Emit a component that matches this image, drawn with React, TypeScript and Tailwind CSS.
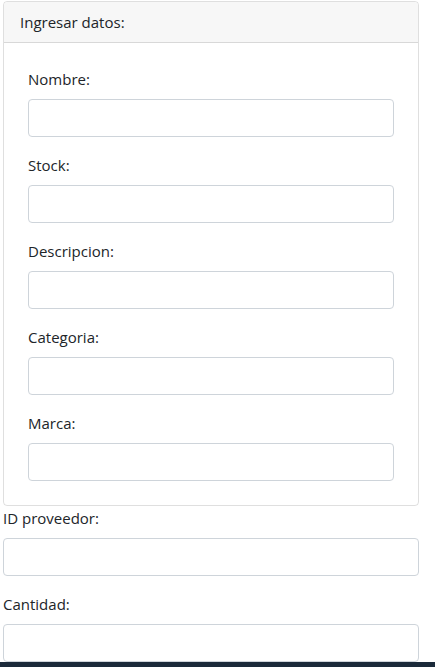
import React from "react";

const cardFields = ["Nombre:", "Stock:", "Descripcion:", "Categoria:", "Marca:"];
const extraFields = ["ID proveedor:", "Cantidad:"];

const Field = ({ label }: { label: string }) => (
  <div className="mb-4">
    <label className="block mb-2 leading-6">{label}</label>
    <input
      type="text"
      className="block w-full h-[38px] rounded border border-[#ced4da] bg-white px-3 outline-none"
    />
  </div>
);

export default function App() {
  return (
    <div
      className="h-[667px] overflow-hidden bg-white text-[15px] text-[#212529] flex flex-col"
      style={{ fontFamily: '"Open Sans", "Liberation Sans", sans-serif' }}
    >
      <div className="w-[416px] ml-[3px] flex flex-col">
        <div className="mt-[1px] rounded border border-[rgba(0,0,0,0.125)]">
          <div className="h-[41px] flex items-center px-4 bg-[#f7f7f7] border-b border-[rgba(0,0,0,0.125)] rounded-t">
            Ingresar datos:
          </div>
          <div className="px-6 pt-6 pb-2">
            {cardFields.map((f) => (
              <Field key={f} label={f} />
            ))}
          </div>
        </div>
        <div>
          {extraFields.map((f) => (
            <Field key={f} label={f} />
          ))}
        </div>
      </div>
      {/* fixed footer bar peeking in at the bottom */}
      <div className="absolute left-0 right-0 top-[662px] h-[5px] bg-[#1b2a3a]" />
    </div>
  );
}
